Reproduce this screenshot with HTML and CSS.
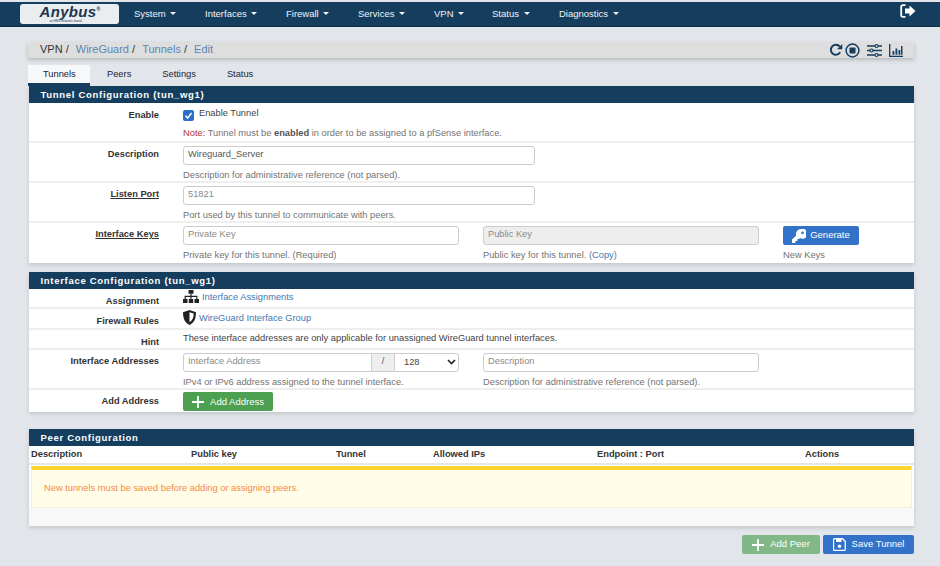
FILE: index.html
```html
<!DOCTYPE html>
<html lang="en">
<head>
  <meta charset="UTF-8">
  <title>VPN / WireGuard / Tunnels / Edit</title>
  <link rel="stylesheet" href="styles.css">
</head>
<body>

  <nav class="navbar">
    <div class="logo">
      <span class="logo-name">Anybus<sup>®</sup></span>
      <span class="logo-sub">an HMS networks brand</span>
    </div>
    <ul class="menu">
      <li class="m-system">System <i class="caret"></i></li>
      <li class="m-interfaces">Interfaces <i class="caret"></i></li>
      <li class="m-firewall">Firewall <i class="caret"></i></li>
      <li class="m-services">Services <i class="caret"></i></li>
      <li class="m-vpn">VPN <i class="caret"></i></li>
      <li class="m-status">Status <i class="caret"></i></li>
      <li>Diagnostics <i class="caret"></i></li>
    </ul>
    <svg class="logout" viewBox="0 0 16 14" width="16" height="14">
      <path d="M5.5 1.2H3Q1.2 1.2 1.2 3v8q0 1.800 1.800 1.800h2.500" fill="none" stroke="#fff" stroke-width="1.800"/>
      <path d="M5 4.500h4.500V1.500L15.500 7l-6 5.500v-3H5z" fill="#fff"/>
    </svg>
  </nav>

  <main class="page">
    <div class="crumbs">
      <div class="crumb-text">VPN / <a class="crumb-link">WireGuard</a> / <a class="crumb-link">Tunnels</a> / <a class="crumb-link">Edit</a></div>
      <div class="crumb-icons">
        <svg viewBox="0 0 14 14" width="14" height="14"><path d="M11.200 9.300A5 5 0 1 1 10.800 3.600" fill="none" stroke="#143d5e" stroke-width="1.900"/><path d="M13.300 1v5.200H8.100z" fill="#143d5e"/></svg>
        <svg viewBox="0 0 15 15" width="15" height="15"><circle cx="7.500" cy="7.500" r="6.400" fill="none" stroke="#143d5e" stroke-width="1.500"/><rect x="4.500" y="4.500" width="6" height="6" rx="1" fill="#143d5e"/></svg>
        <svg class="icon-sliders" viewBox="0 0 15 13" width="15" height="13"><path d="M0 2h15M0 6.500h15M0 11h15" stroke="#143d5e" stroke-width="1.300"/><circle cx="9.500" cy="2" r="1.500" fill="#dedede" stroke="#143d5e" stroke-width="1.100"/><circle cx="4.500" cy="6.500" r="1.500" fill="#dedede" stroke="#143d5e" stroke-width="1.100"/><circle cx="9.500" cy="11" r="1.500" fill="#dedede" stroke="#143d5e" stroke-width="1.100"/></svg>
        <svg class="icon-chart" viewBox="0 0 14 13" width="14" height="13"><path d="M.7 0v12.300H14" fill="none" stroke="#143d5e" stroke-width="1.300"/><path d="M3.500 7h1.800v3.800H3.500zM6.500 4.500h1.800v6.300H6.500zM9.500 6h1.800v4.800H9.500zM12 2h1.500v8.800H12z" fill="#143d5e"/></svg>
      </div>
    </div>

    <ul class="tabs">
      <li class="tab active">Tunnels</li>
      <li class="tab">Peers</li>
      <li class="tab">Settings</li>
      <li class="tab">Status</li>
    </ul>

    <section class="panel">
      <h2 class="panel-title">Tunnel Configuration (tun_wg1)</h2>
      <div class="row row-enable">
        <div class="label">Enable</div>
        <div class="fields column">
          <label class="check">
            <span class="checkbox"><svg viewBox="0 0 11 11" width="11" height="11"><path d="M2.500 5.800l2.100 2.200 4-5" fill="none" stroke="#fff" stroke-width="1.500"/></svg></span>
            Enable Tunnel
          </label>
          <p class="help"><span class="note">Note:</span> Tunnel must be <b>enabled</b> in order to be assigned to a pfSense interface.</p>
        </div>
      </div>
      <div class="row">
        <div class="label">Description</div>
        <div class="fields">
          <div class="col col-wide">
            <div class="input value">Wireguard_Server</div>
            <p class="help">Description for administrative reference (not parsed).</p>
          </div>
        </div>
      </div>
      <div class="row">
        <div class="label"><u>Listen Port</u></div>
        <div class="fields">
          <div class="col col-wide">
            <div class="input">51821</div>
            <p class="help">Port used by this tunnel to communicate with peers.</p>
          </div>
        </div>
      </div>
      <div class="row row-last">
        <div class="label"><u>Interface Keys</u></div>
        <div class="fields">
          <div class="col">
            <div class="input">Private Key</div>
            <p class="help">Private key for this tunnel. (Required)</p>
          </div>
          <div class="col">
            <div class="input disabled">Public Key</div>
            <p class="help">Public key for this tunnel. (<a>Copy</a>)</p>
          </div>
          <div class="col col-btn">
            <button class="btn btn-blue btn-generate">
              <svg viewBox="0 0 14 14" width="14" height="14"><path d="M9 0a5 5 0 0 0-4.800 6.400L0 10.600V14h3.400v-2h2v-2h1.800l.8-.9A5 5 0 1 0 9 0zm1.500 2.500a1.300 1.300 0 1 1 0 2.700 1.300 1.300 0 0 1 0-2.700z" fill="#fff"/></svg>
              <span>Generate</span>
            </button>
            <p class="help">New Keys</p>
          </div>
        </div>
      </div>
    </section>

    <section class="panel">
      <h2 class="panel-title">Interface Configuration (tun_wg1)</h2>
      <div class="row row-link">
        <div class="label">Assignment</div>
        <div class="fields link-line">
          <svg viewBox="0 0 16 13" width="16" height="13"><path d="M5.500 0h5v3.800h-5zM0 9h4.500v4H0zM5.800 9h4.400v4H5.800zM11.500 9H16v4h-4.500z" fill="#222"/><path d="M8 3.800v5M2.200 9V6.400h11.600V9" fill="none" stroke="#222" stroke-width="1.200"/></svg>
          <a>Interface Assignments</a>
        </div>
      </div>
      <div class="row row-link row-fw">
        <div class="label">Firewall Rules</div>
        <div class="fields link-line">
          <svg viewBox="0 0 13 15" width="13" height="15"><path d="M6.500 0L13 2.200C13 8 11.500 12.500 6.500 15 1.500 12.500 0 8 0 2.200z" fill="#222"/><path d="M6.500 2.200l4.200 1.400c0 3.900-1 6.800-4.200 8.700z" fill="#fff"/></svg>
          <a>WireGuard Interface Group</a>
        </div>
      </div>
      <div class="row row-link row-hint">
        <div class="label">Hint</div>
        <div class="fields hint">These interface addresses are only applicable for unassigned WireGuard tunnel interfaces.</div>
      </div>
      <div class="row">
        <div class="label">Interface Addresses</div>
        <div class="fields">
          <div class="col">
            <div class="input-group">
              <div class="input grouped">Interface Address</div>
              <span class="addon">/</span>
              <div class="select">128
                <svg viewBox="0 0 9 6" width="9" height="6"><path d="M1 1l3.500 3.500L8 1" fill="none" stroke="#222" stroke-width="1.600"/></svg>
              </div>
            </div>
            <p class="help">IPv4 or IPv6 address assigned to the tunnel interface.</p>
          </div>
          <div class="col">
            <div class="input">Description</div>
            <p class="help">Description for administrative reference (not parsed).</p>
          </div>
        </div>
      </div>
      <div class="row row-last row-add">
        <div class="label">Add Address</div>
        <div class="fields">
          <button class="btn btn-green btn-add">
            <svg viewBox="0 0 12 12" width="12" height="12"><path d="M6 0v12M0 6h12" stroke="#fff" stroke-width="1.800"/></svg>
            <span>Add Address</span>
          </button>
        </div>
      </div>
    </section>

    <section class="panel panel-peers">
      <h2 class="panel-title">Peer Configuration</h2>
      <div class="peer-head">
        <span>Description</span>
        <span>Public key</span>
        <span>Tunnel</span>
        <span>Allowed IPs</span>
        <span>Endpoint : Port</span>
        <span>Actions</span>
      </div>
      <div class="alert">New tunnels must be saved before adding or assigning peers.</div>
      <div class="panel-foot"></div>
    </section>

    <div class="actions">
      <button class="btn btn-muted">
        <svg viewBox="0 0 12 12" width="12" height="12"><path d="M6 0v12M0 6h12" stroke="#fff" stroke-width="1.800"/></svg>
        <span>Add Peer</span>
      </button>
      <button class="btn btn-blue btn-save">
        <svg viewBox="0 0 13 13" width="13" height="13"><path d="M1.500.7h8l2.800 2.800v7.800a1 1 0 0 1-1 1H1.500a1 1 0 0 1-1-1V1.700a1 1 0 0 1 1-1z" fill="none" stroke="#fff" stroke-width="1.300"/><path d="M3 1h5.500v3H3z" fill="#fff"/><circle cx="6.500" cy="8.300" r="1.700" fill="#fff"/></svg>
        <span>Save Tunnel</span>
      </button>
    </div>
  </main>

</body>
</html>
```

FILE: styles.css
```css
/* General */
body {
  font-family: "Liberation Sans", Arial, sans-serif;
  font-size: 9.3px;
  margin: 0;
  height: 566px;
  overflow: hidden;
  background: #e2e6ea;
  color: #333;
}

a {
  color: #3f78b5;
}

ul {
  list-style: none;
  margin: 0;
  padding: 0;
}

p {
  margin: 0;
}

/* Top bar */
.navbar {
  display: flex;
  align-items: center;
  height: 24px;
  margin-top: 2px;
  background: #143d5e;
  border-bottom: 1px solid #0f2e47;
  color: #f2f4f6;
  position: relative;
}

.logo {
  display: flex;
  flex-direction: column;
  align-items: center;
  width: 99px;
  height: 20px;
  margin-left: 20px;
  background: #e9edf0;
  border-radius: 3px;
  color: #1e3c5a;
}

.logo-name {
  margin: -1px -1px 0 0;
  font-size: 15px;
  font-weight: bold;
  font-style: italic;
  line-height: 17px;
  letter-spacing: 0.3px;
  color: #20344d;
}

.logo-name sup {
  font-size: 5px;
  line-height: 0;
}

.logo-sub {
  font-size: 3px;
  line-height: 3px;
  margin-right: 8px;
}

.menu {
  display: flex;
  margin-left: 15px;
  margin-bottom: 2px;
  font-size: 9.5px;
}

.menu li {
  white-space: nowrap;
}

.m-system { width: 71px; }
.m-interfaces { width: 81px; }
.m-firewall { width: 72px; }
.m-services { width: 76px; }
.m-vpn { width: 58px; }
.m-status { width: 67px; }

.caret {
  display: inline-block;
  margin-left: 2px;
  vertical-align: middle;
  border-top: 3px solid #f2f4f6;
  border-left: 3px solid transparent;
  border-right: 3px solid transparent;
}

.logout {
  position: absolute;
  left: 900px;
  top: 2px;
}

/* Page */
.page {
  padding: 15px 26px 0 29px;
}

.crumbs {
  display: flex;
  justify-content: space-between;
  align-items: center;
  height: 16px;
  margin-left: -1px;
  padding: 0 11px 0 12px;
  background: #dedede;
  box-shadow: 0 2px 4px rgba(0, 0, 0, 0.2);
  font-size: 11px;
}

.crumb-text {
  margin-top: -2px;
}

.crumb-link {
  margin-left: 4px;
  color: #5a86b5;
}

.crumb-icons {
  display: flex;
  align-items: center;
  gap: 2px;
}

.icon-sliders {
  margin-left: 5px;
}

.icon-chart {
  margin-left: 5px;
}

.tabs {
  display: flex;
  height: 21px;
  margin: 7px 0 0 -1px;
  font-size: 9.3px;
}

.tab {
  padding: 4px 14px 0 17px;
  color: #223;
}

.tab.active {
  width: 62px;
  box-sizing: border-box;
  padding-left: 15px;
  padding-right: 0;
  background: #f7f8f9;
  border-bottom: 3px solid #143d5e;
}

.panel {
  background: #fff;
  margin-bottom: 9px;
  box-shadow: 0 2px 4px rgba(0, 0, 0, 0.14);
}

.panel-title {
  margin: 0;
  height: 17px;
  padding-left: 11.5px;
  background: #143d5e;
  color: #fff;
  font-size: 9.5px;
  line-height: 17px;
  letter-spacing: 0.7px;
}

/* Form rows */
.row {
  display: flex;
  box-sizing: border-box;
  height: 40px;
  border-bottom: 2px solid #eeeeee;
}

.row-last {
  border-bottom: 0;
}

.label {
  flex: 0 0 130px;
  padding-top: 6px;
  text-align: right;
  font-weight: bold;
  color: #333;
}

.row-enable .label {
  padding-top: 7px;
}

.label u {
  text-underline-offset: 1px;
}

.fields {
  display: flex;
  gap: 24px;
  margin-left: 24px;
  padding-top: 3px;
}

.fields.column {
  flex-direction: column;
  gap: 0;
}

.col {
  display: flex;
  flex-direction: column;
  width: 276px;
}

.col-wide {
  width: 352px;
}

.col-btn {
  width: 76px;
}

.input {
  box-sizing: border-box;
  height: 19px;
  padding-left: 4px;
  border: 1px solid #ccc;
  border-radius: 3px;
  background: #fff;
  color: #8a8a8a;
  line-height: 15px;
}

.input.value {
  color: #555;
}

.input.disabled {
  background: #eee;
}

.help {
  margin-top: 4px;
  line-height: 12px;
  color: #737373;
}

.help b {
  color: #555;
}

.note {
  color: #b5332e;
}

.check {
  display: flex;
  align-items: flex-start;
  height: 19px;
  line-height: 15px;
  color: #444;
}

.checkbox {
  width: 11px;
  height: 11px;
  margin: 4px 5px 0 0;
  background: #2a6fc9;
  border-radius: 2px;
}

.checkbox svg {
  display: block;
}

.row-enable .help {
  margin-top: 2px;
}

.row-link {
  height: 20px;
}

.row-fw {
  height: 21px;
}

.row-link .label {
  padding-top: 7px;
}

.link-line {
  align-items: flex-start;
  gap: 3px;
  padding-top: 1px;
  line-height: 12px;
}

.link-line a {
  padding-top: 1px;
}

.row-fw a {
  padding-top: 2px;
}

.hint {
  padding-top: 2px;
  line-height: 12px;
  color: #444;
}

.input-group {
  display: flex;
  height: 19px;
}

.input.grouped {
  flex: 1;
  border-radius: 3px 0 0 3px;
}

.addon {
  box-sizing: border-box;
  width: 22px;
  background: #eee;
  border-top: 1px solid #ccc;
  border-bottom: 1px solid #ccc;
  color: #555;
  text-align: center;
  line-height: 15px;
}

.select {
  display: flex;
  justify-content: space-between;
  align-items: center;
  box-sizing: border-box;
  width: 65px;
  padding: 0 2px 2px 9px;
  border: 1px solid #ccc;
  border-radius: 0 3px 3px 0;
  color: #444;
}

.row-add {
  height: 22px;
}

.row-add .fields {
  padding-top: 2px;
}

/* Buttons */
.btn {
  display: flex;
  align-items: center;
  justify-content: center;
  box-sizing: border-box;
  height: 19px;
  padding: 0;
  border: 0;
  border-radius: 2px;
  color: #fff;
  font-family: inherit;
  font-size: 9.5px;
}

.btn span {
  margin-top: -2px;
}

.btn-add span {
  margin-top: -1px;
}

.btn-blue {
  background: #3273c9;
}

.btn-green {
  background: #4da04f;
}

.btn-muted {
  width: 78px;
  gap: 6px;
  background: #82b887;
}

.btn-generate {
  width: 76px;
  gap: 4px;
}

.btn-add {
  width: 90px;
  gap: 6px;
}

.btn-save {
  width: 91px;
  gap: 6px;
}

/* Peers */
.panel-peers {
  margin-top: 17px;
  margin-bottom: 0;
  background: #fff;
}

.peer-head {
  display: grid;
  grid-template-columns: 160px 145px 97px 164px 208px auto;
  height: 17px;
  padding-left: 2px;
  border-bottom: 2px solid #e6e6e6;
  font-weight: bold;
  line-height: 17px;
}

.alert {
  box-sizing: border-box;
  height: 42px;
  margin: 1px 2px 0;
  padding: 11px 0 0 12px;
  background: #fffde8;
  border: 1px solid #fbeed5;
  border-top: 4px solid #fcd62f;
  color: #f58a45;
  line-height: 14px;
}

.panel-foot {
  height: 18px;
  background: #f8f8f8;
}

.actions {
  display: flex;
  justify-content: flex-end;
  gap: 3px;
  margin-top: 9px;
}
```
